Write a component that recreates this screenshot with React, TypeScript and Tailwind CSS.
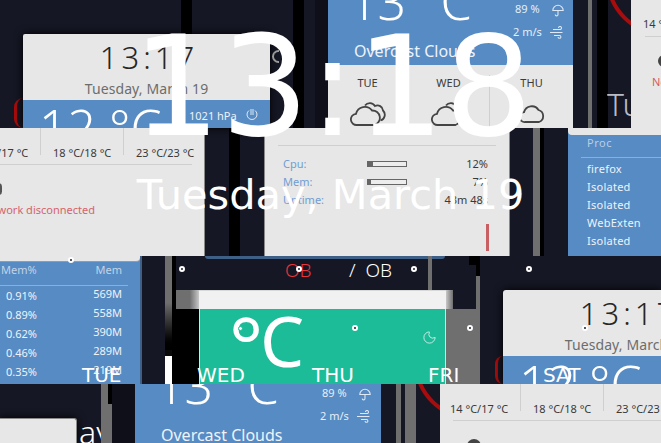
import React from 'react';
import { Moon } from 'lucide-react';

// the screenshot is a glitched desktop: tiles of windows pasted on a free canvas, so tiles are absolute
const Dot: React.FC<{ className: string }> = ({ className }) => (
  <span className={`absolute w-[6px] h-[6px] rounded-full border-2 border-white bg-[#1c2030] ${className}`} />
);

const Temps: React.FC = () => (
  <div className="flex pt-[17px] h-[36px] text-[11px] leading-[15px] text-[#3a3a3a] whitespace-nowrap">
    <span className="w-[83px] shrink-0 pl-[10px]">14 °C/17 °C</span>
    <span className="w-[83px] shrink-0 pl-[10px]">18 °C/18 °C</span>
    <span className="w-[83px] shrink-0 pl-[10px]">23 °C/23 °C</span>
  </div>
);

const BlueStats: React.FC = () => (
  <>
    <span className="absolute left-[187px] top-[2px] text-[11px] leading-[14px] text-[#e6eef7]">89 %</span>
    <svg className="absolute left-[224px] top-[4px] w-[12px] h-[13px]" viewBox="0 0 12 13" fill="none" stroke="#dfe8f3" strokeWidth="1.1">
      <path d="M.8 6.5a5.2 5.2 0 0 1 10.4 0zM6 6.5v4a1.4 1.4 0 0 1-2.8 0" />
    </svg>
    <span className="absolute left-[185px] top-[25px] text-[11px] leading-[14px] text-[#e6eef7]">2 m/s</span>
    <svg className="absolute left-[222px] top-[26px] w-[13px] h-[13px]" viewBox="0 0 13 13" fill="none" stroke="#dfe8f3" strokeWidth="1.1">
      <path d="M3 3.5h7a1.5 1.5 0 1 0-1.5-1.5M0 6.5h12.5M4 9.5h5.5a1.4 1.4 0 1 1-1.4 1.4" />
    </svg>
    <span className="absolute left-[26px] top-[40px] text-[16px] leading-[22px] text-[#eef3f9] whitespace-nowrap">Overcast Clouds</span>
    <span className="absolute left-[21px] top-[-24px] text-[50px] leading-[50px] text-white whitespace-pre font-light">13 °C</span>
  </>
);

const Bar: React.FC<{ pct: number }> = ({ pct }) => (
  <div className="w-[40px] h-[6px] border border-[#666] bg-[#ededed]">
    <div className="h-full bg-[#666]" style={{ width: `${pct}%` }} />
  </div>
);

const TwoClouds: React.FC = () => (
  <svg className="w-[36px] h-[24px]" viewBox="0 0 36 24" fill="none" stroke="#444" strokeWidth="1.8">
    <path d="M7 23a5.6 5.6 0 0 1-1-11.2A9 9 0 0 1 22 8.5a7.4 7.4 0 0 1 2.5 14.5z" />
    <path d="M15 3.5a6 6 0 0 1 10 .5a5.5 5.5 0 0 1 8 4.5a6 6 0 0 1-2.5 10" />
  </svg>
);

const OneCloud: React.FC = () => (
  <svg className="w-[26px] h-[19px] mt-[2px]" viewBox="0 0 26 19" fill="none" stroke="#444" strokeWidth="1.8">
    <path d="M6 18a4.9 4.9 0 0 1-1-9.8A8 8 0 0 1 19.5 6a6.3 6.3 0 0 1 .5 12z" />
  </svg>
);

const ClockHeader: React.FC = () => (
  <div className="w-[247px] h-[66px] shrink-0 flex flex-col items-center">
    <span className="mt-[1px] ml-[5px] text-[31px] leading-[44px] tracking-[4px] text-[#262626] font-light whitespace-pre">13:17</span>
    <span className="text-[14px] leading-[19px] tracking-[0.1px] text-[#6d6d6d] whitespace-nowrap">Tuesday, March 19</span>
  </div>
);

const App: React.FC = () => {
  return (
    <div className="relative w-[661px] h-[443px] overflow-hidden bg-[#151724] font-['Noto_Sans',sans-serif]">
      {/* row 1 */}
      <div className="absolute left-[181px] top-0 w-[11px] h-[128px] bg-black" />
      <div className="absolute left-[293px] top-0 w-[11px] h-[128px] bg-black" />
      <div className="absolute left-[315px] top-0 w-[13px] h-[128px] bg-[#0e0f18]" />
      <div className="absolute left-[588px] top-0 w-[4px] h-[128px] bg-[#6f6f6f]" />
      <div className="absolute left-[597px] top-0 w-[11px] h-[128px] bg-black" />

      {/* clock window */}
      <div className="absolute left-[14px] top-[98px] w-[9px] h-[30px] rounded-l-full border-l-[3px] border-[#a80c0c]" />
      <div className="absolute left-[23px] top-[34px] w-[247px] h-[94px] overflow-hidden rounded-t-[2px] bg-[#e7e7e7] shadow-[0_0_8px_#000] flex flex-col">
        <ClockHeader />
        <div className="relative flex-1 bg-[#568bc4]">
          <span className="absolute left-[16px] top-[2px] text-[50px] leading-[50px] text-white font-light whitespace-pre">12 °C</span>
          <span className="absolute left-[166px] top-[8px] text-[11px] leading-[15px] text-[#eef3f9] whitespace-nowrap">1021 hPa</span>
          <svg className="absolute left-[223px] top-[8px] w-[12px] h-[13px]" viewBox="0 0 12 13" fill="none" stroke="#dfe8f3" strokeWidth="1">
            <path d="M3 2.5a5 5 0 1 0 6 0M5 1v6M7 1v6" />
          </svg>
        </div>
      </div>
      <div className="absolute left-[272px] top-[50px] w-[7px] h-[13px] rounded-l-full border-2 border-r-0 border-[#9a9a9a]" />

      {/* weather window */}
      <div className="absolute left-[328px] top-0 w-[245px] h-[128px] overflow-hidden bg-[#e7e7e7]">
        <div className="relative h-[65px] bg-[#568bc4] overflow-hidden">
          <BlueStats />
        </div>
        <div className="flex pt-[10px] text-[11px] leading-[16px] text-[#3a3a3a]">
          <div className="w-[81px] flex flex-col items-center gap-[11px] border-r border-[#cfcfcf] h-[55px]">
            <span>TUE</span>
            <TwoClouds />
          </div>
          <div className="w-[83px] flex flex-col items-center gap-[11px] border-r border-[#cfcfcf] h-[55px]">
            <span>WED</span>
            <TwoClouds />
          </div>
          <div className="w-[84px] flex flex-col items-center gap-[11px]">
            <span>THU</span>
            <OneCloud />
          </div>
        </div>
      </div>

      {/* red ring + scraps on the right */}
      <div className="absolute left-[608px] top-0 w-[24px] h-[37px] overflow-hidden">
        <div className="absolute left-[-2px] top-[-80px] w-[116px] h-[116px] rounded-full border-[4px] border-[#a80c0c]" />
      </div>
      <span className="absolute left-[607px] top-[82px] w-[25px] overflow-hidden text-[32px] leading-[44px] text-[#b9bcc4] font-light">Tu</span>
      <div className="absolute left-[631px] top-0 w-[30px] h-[128px] overflow-hidden bg-[#e7e7e7]">
        <span className="absolute left-[12px] top-[17px] text-[11px] leading-[14px] text-[#3a3a3a] whitespace-nowrap">14 °C</span>
        <div className="absolute left-[14px] top-[36px] w-[20px] h-px bg-[#cfcfcf]" />
        <div className="absolute left-[27px] top-[55px] w-[12px] h-[12px] rounded-full bg-[#444]" />
        <span className="absolute left-[21px] top-[75px] text-[11px] leading-[14px] text-[#d65c62] whitespace-nowrap">Network</span>
      </div>

      {/* row 2 */}
      <div className="absolute left-0 top-[128px] w-[205px] h-[128px] overflow-hidden bg-[#e7e7e7] border-r border-[#8a8a8a]">
        <div className="-ml-[40px] w-[232px]">
          <Temps />
        </div>
        <div className="w-[192px] h-px bg-[#cfcfcf]" />
        <div className="absolute left-[40px] top-0 w-px h-[27px] bg-[#cfcfcf]" />
        <div className="absolute left-[123px] top-0 w-px h-[27px] bg-[#cfcfcf]" />
        <div className="absolute left-[-5px] top-[55px] w-[7px] h-[12px] rounded-full bg-[#555]" />
        <span className="absolute left-[-21px] top-[75px] text-[11px] leading-[14px] text-[#d6636b] whitespace-nowrap">Network disconnected</span>
      </div>
      <div className="absolute left-[229px] top-[128px] w-[11px] h-[128px] bg-black" />
      <div className="absolute left-[264px] top-[128px] w-[246px] h-[128px] overflow-hidden bg-[#e7e7e7] border-x border-[#8a8a8a] px-[13px]">
        <div className="h-[18px] border-b border-[#cfcfcf]" />
        <div className="pl-[5px] pr-[8px] pt-[10px] flex flex-col gap-[3px] text-[11px] leading-[15px]">
          <div className="flex items-center">
            <span className="w-[84px] text-[#6f9ed4]">Cpu:</span>
            <Bar pct={12} />
            <span className="ml-auto text-[#3a3a3a]">12%</span>
          </div>
          <div className="flex items-center">
            <span className="w-[84px] text-[#6f9ed4]">Mem:</span>
            <Bar pct={7} />
            <span className="ml-auto text-[#3a3a3a]">7%</span>
          </div>
          <div className="flex items-center">
            <span className="text-[#6f9ed4]">Uptime:</span>
            <span className="ml-auto text-[#3a3a3a]">43m 48s</span>
          </div>
        </div>
        <div className="absolute left-[221px] top-[96px] w-[3px] h-[27px] bg-[#c85f62]" />
      </div>
      <div className="absolute left-[533px] top-[128px] w-[7px] h-[128px] bg-[#6f6f6f]" />
      <div className="absolute left-[540px] top-[128px] w-[4px] h-[128px] bg-black" />
      <div className="absolute left-[568px] top-[128px] w-[93px] h-[128px] overflow-hidden bg-[#568bc4]">
        <div className="h-[7px] bg-[#e7e7e7] rounded-bl-[4px]" />
        <div className="ml-[13px] pl-[6px] pt-[1px] h-[23px] text-[11px] leading-[14px] tracking-[0.5px] text-[#b9cde4] border-b border-[#8bb0d8]">Proc</div>
        <div className="pl-[19px] pt-[2px] flex flex-col text-[11px] leading-[18px] tracking-[0.25px] text-[#eef3f9]">
          <span>firefox</span>
          <span>Isolated</span>
          <span>Isolated</span>
          <span>WebExten</span>
          <span>Isolated</span>
        </div>
      </div>

      {/* row 3 */}
      <div className="absolute left-0 top-[256px] w-[142px] h-[128px] overflow-hidden bg-[#568bc4] border-r-2 border-[#3e5f86]">
        <div className="h-[6px] bg-[#e7e7e7] rounded-br-[4px] border-b border-[#9a9a9a]" />
        <div className="flex justify-between pl-[1px] pr-[6px] pt-[1px] h-[24px] mr-[12px] text-[11px] leading-[14px] text-[#c3d3e6] border-b border-[#8bb0d8]">
          <span>Mem%</span>
          <span>Mem</span>
        </div>
        <div className="flex flex-col pl-[6px] pr-[18px] text-[11px] leading-[18px] text-[#eef3f9]">
          {[['0.91%', '569M'], ['0.89%', '558M'], ['0.62%', '390M'], ['0.46%', '289M'], ['0.35%', '219M']].map(([a, b]) => (
            <div key={a} className="flex justify-between">
              <span className="pt-[1px]">{a}</span>
              <span className="-mt-[1px]">{b}</span>
            </div>
          ))}
        </div>
      </div>

      <div className="absolute left-[165px] top-[256px] w-[7px] h-[94px] bg-gradient-to-b from-[#6f6f6f] via-[#6f6f6f] to-black" />
      <div className="absolute left-[165px] top-[350px] w-[7px] h-[6px] bg-[#0a0a0a]" />
      <div className="absolute left-[165px] top-[356px] w-[7px] h-[28px] bg-white" />
      <div className="absolute left-[172px] top-[256px] w-[4px] h-[128px] bg-black" />
      <div className="absolute left-[172px] top-[309px] w-[27px] h-[75px] bg-black" />
      <div className="absolute left-[176px] top-[290px] w-[23px] h-[19px] bg-gradient-to-r from-[#6f6f6f] from-60% to-[#c8c8c8]" />
      <div className="absolute left-[205px] top-[256px] w-[240px] h-[3px] bg-[#3e5f86] rounded-b-[3px]" />

      <div className="absolute left-[199px] top-[290px] w-[247px] h-[19px] bg-[#f1f1f1] border-t border-[#d8d8d8]" />
      <div className="absolute left-[199px] top-[309px] w-[247px] h-[75px] overflow-hidden bg-[#1dbc99] border-x border-[#cfe9e2]">
        <span className="absolute left-[29px] top-[-12px] text-[80px] leading-[96px] text-white">°</span>
        <span className="absolute left-[60px] top-[-17px] text-[70px] leading-[96px] text-white">C</span>
        <Moon className="absolute left-[222px] top-[21px] w-[15px] h-[15px] text-[#d6f2eb]" strokeWidth={1.4} />
      </div>
      <div className="absolute left-[446px] top-[290px] w-[7px] h-[19px] bg-gradient-to-r from-[#c8c8c8] to-[#6f6f6f]" />
      <div className="absolute left-[446px] top-[309px] w-[34px] h-[75px] bg-[#6f6f6f]" />
      <div className="absolute left-[476px] top-[276px] w-[4px] h-[33px] bg-[#6f6f6f]" />
      <div className="absolute left-[476px] top-[256px] w-[4px] h-[20px] bg-black" />
      <div className="absolute left-[469px] top-[256px] w-[7px] h-[9px] bg-black" />
      <div className="absolute left-[428px] top-[256px] w-[4px] h-[34px] bg-[#6f6f6f]" />

      <span className="absolute left-[285px] top-[258px] text-[19px] leading-[24px] font-light text-[#e8353c]">OB</span>
      <span className="absolute left-[349px] top-[258px] text-[19px] leading-[24px] font-light text-white whitespace-pre">/  OB</span>

      {/* red ring + clock window again */}
      <div className="absolute left-[495px] top-[356px] w-[8px] h-[28px] rounded-l-full border-l-[3px] border-[#a80c0c]" />
      <div className="absolute left-[503px] top-[290px] w-[158px] h-[94px] overflow-hidden rounded-tl-[3px] bg-[#e7e7e7] shadow-[0_0_8px_#000] flex flex-col">
        <ClockHeader />
        <div className="relative flex-1 bg-[#568bc4]">
          <span className="absolute left-[16px] top-[2px] text-[50px] leading-[50px] text-white font-light whitespace-pre">12 °C</span>
        </div>
      </div>

      {/* forecast labels from the lock screen */}
      <div className="absolute left-0 top-[364px] w-[661px] h-[20px] overflow-hidden font-['DejaVu_Sans',sans-serif] text-[20px] leading-[26px] text-white">
        <span className="absolute left-[82px] top-[-2px]">TUE</span>
        <span className="absolute left-[197px] top-[-2px]">WED</span>
        <span className="absolute left-[312px] top-[-2px]">THU</span>
        <span className="absolute left-[428px] top-[-2px]">FRI</span>
        <span className="absolute left-[543px] top-[-2px]">SAT</span>
      </div>

      {/* row 4 */}
      <div className="absolute left-[101px] top-[384px] w-[11px] h-[59px] bg-[#6f6f6f]" />
      <div className="absolute left-[108px] top-[384px] w-[4px] h-[20px] bg-black" />
      <div className="absolute left-[112px] top-[384px] w-[23px] h-[59px] bg-[#0e0f18]" />
      <div className="absolute left-0 top-[418px] w-[77px] h-[25px] bg-[#e7e7e7] rounded-tr-[3px] border-r border-t border-[#8a8a8a] shadow-[0_0_8px_#000]" />
      <span className="absolute left-[79px] top-[420px] w-[22px] h-[23px] overflow-hidden text-[32px] leading-[24px] text-white font-light">ay</span>

      <div className="absolute left-[135px] top-[384px] w-[246px] h-[59px] overflow-hidden bg-[#568bc4]">
        <BlueStats />
      </div>
      <div className="absolute left-[396px] top-[384px] w-[5px] h-[59px] bg-[#6f6f6f]" />
      <div className="absolute left-[405px] top-[384px] w-[11px] h-[59px] bg-[#6f6f6f]" />
      <div className="absolute left-[416px] top-[384px] w-[24px] h-[37px] overflow-hidden">
        <div className="absolute left-[-2px] top-[-80px] w-[116px] h-[116px] rounded-full border-[4px] border-[#a80c0c]" />
      </div>
      <div className="absolute left-[440px] top-[384px] w-[221px] h-[59px] overflow-hidden bg-[#e7e7e7]">
        <Temps />
        <div className="ml-[13px] h-px bg-[#cfcfcf]" />
        <div className="absolute left-[80px] top-0 w-px h-[27px] bg-[#cfcfcf]" />
        <div className="absolute left-[163px] top-0 w-px h-[27px] bg-[#cfcfcf]" />
        <div className="absolute left-[27px] top-[55px] w-[14px] h-[14px] rounded-full bg-[#444]" />
      </div>

      {/* dots */}
      <Dot className="left-[68px] top-[257px]" />
      <Dot className="left-[179px] top-[266px]" />
      <Dot className="left-[296px] top-[266px]" />
      <Dot className="left-[411px] top-[266px]" />
      <Dot className="left-[526px] top-[266px]" />
      <Dot className="left-[352px] top-[325px]" />
      <Dot className="left-[467px] top-[325px]" />
      <Dot className="left-[582px] top-[325px]" />
      <span className="absolute left-[238px] top-[326px] w-[5px] h-[5px] rounded-full border border-[#1dbc99] bg-white" />

      {/* big lock screen clock */}
      <div className="absolute left-0 top-0 w-[661px] pt-[5px] flex flex-col items-center text-white font-['DejaVu_Sans',sans-serif] pointer-events-none">
        <span className="ml-[4px] text-[139px] leading-[164px] whitespace-nowrap">13:18</span>
        <span className="text-[41.5px] leading-[52px] whitespace-nowrap">Tuesday, March 19</span>
      </div>
    </div>
  );
};

export default App;
